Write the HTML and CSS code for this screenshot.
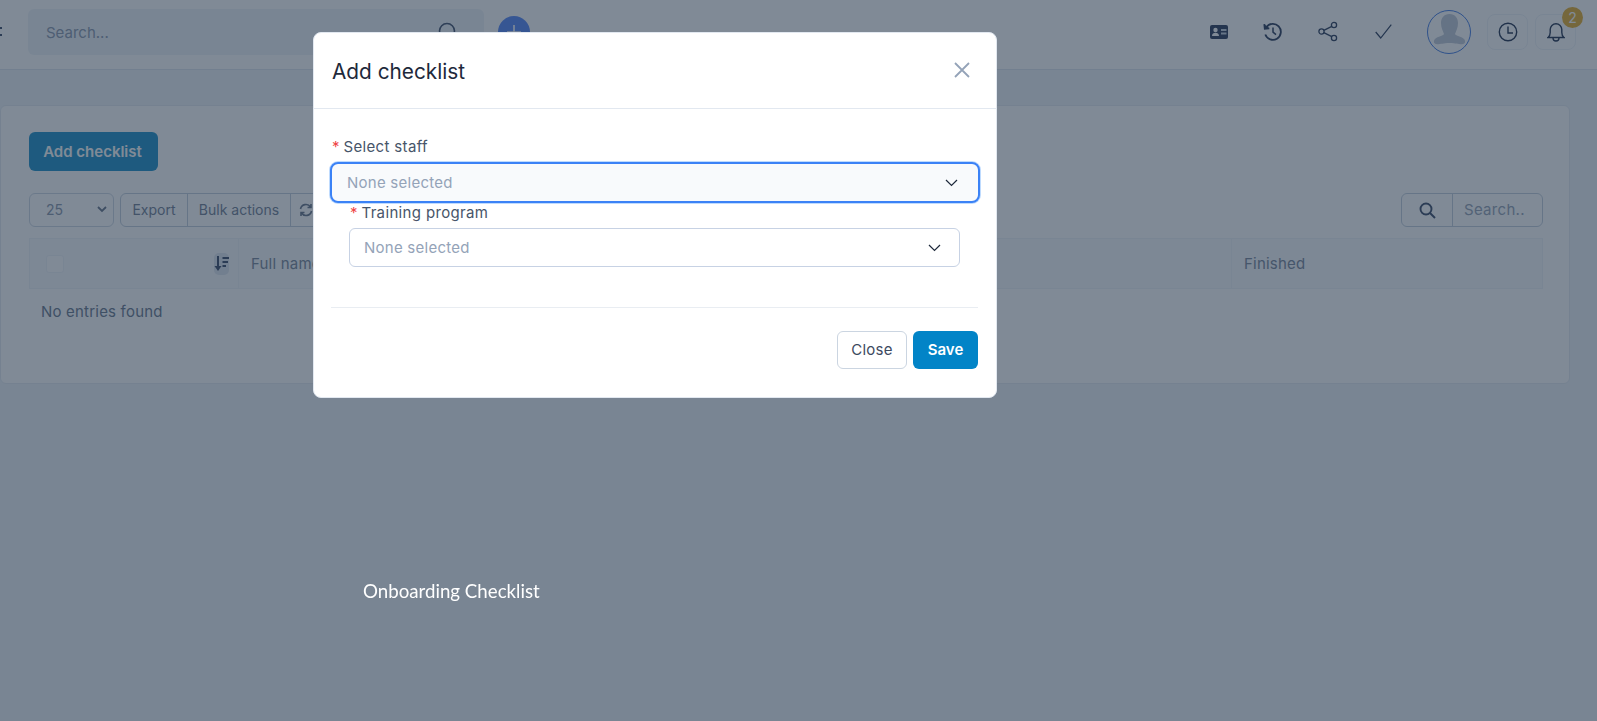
FILE: index.html
```html
<!DOCTYPE html>
<html lang="en">
<head>
<meta charset="utf-8">
<title>Add checklist</title>
<link rel="stylesheet" href="styles.css">
</head>
<body>
<div class="page">
  <header class="topbar">
    <span class="menu-stub"></span>
    <div class="global-search">
      <span class="global-search-text">Search...</span>
      <svg class="global-search-icon" width="22" height="22" viewBox="0 0 22 22" fill="none" stroke="#5b6880" stroke-width="1.6"><circle cx="11" cy="10" r="7.500"/><path d="M16 16l5 5"/></svg>
    </div>
    <span class="quick-add">
      <svg width="14" height="14" viewBox="0 0 14 14" stroke="#fff" stroke-width="1.6"><path d="M7 0v14M0 7h14"/></svg>
    </span>
    <nav class="top-icons">
      <svg class="i-id" width="18" height="14" viewBox="0 0 18 14"><rect width="18" height="14" rx="2" fill="#465570"/><circle cx="5.500" cy="5" r="2.200" fill="#fff"/><path d="M2 11c0-2.200 1.600-3.200 3.500-3.200S9 8.800 9 11z" fill="#fff"/><path d="M11 4h5.500v2H11zM11 7.500h5.500v2H11z" fill="#cbd5e1"/></svg>
      <svg class="i-history" width="20" height="20" viewBox="0 0 20 20" fill="none" stroke="#465570" stroke-width="1.8"><path d="M3.300 5.200A8 8 0 1 1 2.300 12.500"/><path d="M1.300 2.200l.5 4.500 4.500-.4" fill="#465570"/><path d="M10 5.500v4.700l3 2.500" stroke-width="1.500"/></svg>
      <svg class="i-share" width="20" height="21" viewBox="0 0 20 21" fill="none" stroke="#465570" stroke-width="1.300"><circle cx="16" cy="4" r="2.600"/><circle cx="3.500" cy="10.500" r="2.600"/><circle cx="16" cy="17" r="2.600"/><path d="M5.800 9.300l8-4M5.800 11.700l8 4"/></svg>
      <svg class="i-check" width="17" height="15" viewBox="0 0 17 15" fill="none" stroke="#465570" stroke-width="1.200"><path d="M.7 8l5 6L16.300.7"/></svg>
      <span class="avatar">
        <svg width="39" height="39" viewBox="0 0 39 39"><path d="M19.500 2c5.500 0 8.500 4 8.500 9 0 5-2 8-3 11 1 2 6 2 9 5 2 2 1 5-1 5-3 1-6-1-13.500-1s-10.500 2-13.500 1c-2 0-3-3-1-5 3-3 8-3 9-5-1-3-3-6-3-11 0-5 3-9 8.500-9z" fill="#c9d0dc"/></svg>
      </span>
      <span class="icon-box">
        <svg width="20" height="20" viewBox="0 0 20 20" fill="none" stroke="#3f4d66" stroke-width="1.400"><circle cx="10" cy="10" r="8.700"/><path d="M10 4.500V11h5"/></svg>
      </span>
      <span class="icon-box bell">
        <svg width="18" height="20" viewBox="0 0 18 20" fill="none" stroke="#3f4d66" stroke-width="1.400"><path d="M1 15.500c1.500-1 2.200-2.500 2.200-5V7.500a5.800 5.800 0 0 1 11.600 0v3c0 2.500.7 4 2.200 5z"/><path d="M6 16c0 4 6 4 6 0"/></svg>
        <span class="badge">2</span>
      </span>
    </nav>
  </header>

  <main class="card">
    <button class="btn-add">Add checklist</button>
    <div class="tools">
      <div class="tools-left">
        <span class="length">25
          <svg width="10" height="7" viewBox="0 0 10 7" fill="none" stroke="#7b8799" stroke-width="1.800"><path d="M1 1l4 4 4-4"/></svg>
        </span>
        <div class="btn-group">
          <span class="grp-btn export">Export</span>
          <span class="grp-btn bulk">Bulk actions</span>
          <span class="grp-btn refresh">
            <svg width="14" height="14" viewBox="0 0 14 14" fill="none" stroke="#7b8799" stroke-width="1.600"><path d="M1.500 6a5.500 5.500 0 0 1 10-2M12.500 8a5.500 5.500 0 0 1-10 2M12 1v3.500H8.500M2 13V9.500h3.500"/></svg>
          </span>
        </div>
      </div>
      <div class="table-search">
        <span class="table-search-icon">
          <svg width="17" height="17" viewBox="0 0 17 17" fill="none" stroke="#55637c" stroke-width="1.900"><circle cx="7" cy="7" r="5.500"/><path d="M11 11l5 5"/></svg>
        </span>
        <span class="table-search-text">Search..</span>
      </div>
    </div>
    <div class="thead">
      <div class="th-check">
        <span class="checkbox"></span>
        <span class="sort">
          <svg width="15" height="15" viewBox="0 0 15 15" fill="#55637c"><path d="M3 0h2v10h2.500L4 15 .5 10H3zM8.500 1H15v2H8.500zM8.500 5H14v2H8.500zM8.500 9H12v2H8.500z"/></svg>
        </span>
      </div>
      <div class="th-name">Full name</div>
      <div class="th-finished">Finished</div>
    </div>
    <p class="empty">No entries found</p>
  </main>
</div>

<div class="backdrop">
  <section class="modal">
    <header class="modal-head">
      <h2 class="modal-title">Add checklist</h2>
      <svg class="modal-x" width="16" height="16" viewBox="0 0 16 16" stroke="#94a3b8" stroke-width="1.800"><path d="M1 1l14 14M15 1L1 15"/></svg>
    </header>
    <div class="modal-body">
      <div class="field">
        <label class="label"><span class="req">*</span> Select staff</label>
        <div class="select focus">
          <span>None selected</span>
          <svg width="13" height="8" viewBox="0 0 13 8" fill="none" stroke="#1e293b" stroke-width="1.200"><path d="M1 1l5.500 5.500L12 1"/></svg>
        </div>
      </div>
      <div class="field indented">
        <label class="label"><span class="req">*</span> Training program</label>
        <div class="select">
          <span>None selected</span>
          <svg width="13" height="8" viewBox="0 0 13 8" fill="none" stroke="#1e293b" stroke-width="1.200"><path d="M1 1l5.500 5.500L12 1"/></svg>
        </div>
      </div>
      <hr class="divider">
      <div class="modal-foot">
        <button class="btn btn-close">Close</button>
        <button class="btn btn-save">Save</button>
      </div>
    </div>
  </section>
  <p class="caption">Onboarding Checklist</p>
</div>
</body>
</html>
```

FILE: styles.css
```css
* { box-sizing: border-box; }
html, body { margin: 0; padding: 0; }
body {
  width: 1597px;
  height: 721px;
  overflow: hidden;
  background: #f1f5f9;
  font-family: Inter, "Liberation Sans", sans-serif;
  color: #475569;
}
.page { height: 721px; }

/* top bar */
.topbar {
  display: flex;
  align-items: center;
  height: 70px;
  background: #fff;
  border-bottom: 1px solid #e2e8f0;
  margin-bottom: 35px;
  padding: 0 21px 6px 0;
}
.menu-stub {
  width: 2px;
  height: 9px;
  margin-right: 26px;
  border-top: 2px solid #55637c;
  border-bottom: 2px solid #55637c;
}
.global-search {
  width: 456px;
  height: 46px;
  background: #f1f5f9;
  border-radius: 6px;
  display: flex;
  align-items: center;
  justify-content: space-between;
  padding: 0 26px 0 18px;
  font-size: 15px;
  color: #9aa6b8;
}
.global-search-text { padding-top: 1px; }
.quick-add {
  width: 32px;
  height: 32px;
  margin-left: 14px;
  border-radius: 50%;
  background: #6b96f8;
  display: flex;
  align-items: center;
  justify-content: center;
}
.top-icons {
  margin-left: auto;
  display: flex;
  align-items: center;
}
.i-id { margin-right: 35px; }
.i-history { margin-right: 35px; }
.i-share { margin-right: 37px; }
.i-check { margin-right: 35px; }
.avatar {
  width: 44px;
  height: 44px;
  border-radius: 50%;
  border: 1.500px solid #5b8de8;
  background: #fff;
  padding: 1px;
  margin-right: 16px;
  display: flex;
  align-items: center;
  justify-content: center;
  overflow: hidden;
}
.avatar svg { border-radius: 50%; background: #fff; }
.icon-box {
  width: 41px;
  height: 36px;
  border: 1px solid #f1f5f9;
  border-radius: 8px;
  display: flex;
  align-items: center;
  justify-content: center;
  position: relative;
}
.bell { margin-left: 7px; }
.badge {
  position: absolute;
  top: -8px;
  right: -8px;
  width: 21px;
  height: 21px;
  border-radius: 50%;
  background: #e8b84a;
  color: #fff;
  font-size: 14px;
  line-height: 21px;
  text-align: center;
}

/* card */
.card {
  margin: 0 27px 0 0;
  height: 279px;
  background: #fff;
  border: 1px solid #e8edf3;
  border-radius: 6px;
  padding: 26px 26px 0 28px;
}
.btn-add {
  display: block;
  width: 129px;
  height: 39px;
  border: 0;
  border-radius: 6px;
  background: #3a9fd0;
  color: #fff;
  font: 600 15px Inter, sans-serif;
  padding: 0 2px 1px 0;
}
.tools {
  display: flex;
  justify-content: space-between;
  margin-top: 22px;
}
.tools-left { display: flex; gap: 6px; }
.length {
  width: 85px;
  height: 34px;
  border: 1px solid #d5dde7;
  border-radius: 6px;
  display: flex;
  align-items: center;
  justify-content: space-between;
  padding: 0 6px 1px 16px;
  font-size: 14px;
  color: #98a4b6;
}
.btn-group {
  display: flex;
  height: 34px;
  border: 1px solid #cbd5e1;
  border-radius: 6px;
  font-size: 14px;
  color: #8490a3;
}
.grp-btn {
  display: flex;
  align-items: center;
  justify-content: center;
  height: 100%;
  padding-bottom: 1px;
  border-right: 1px solid #cbd5e1;
}
.export { width: 67px; }
.bulk { width: 103px; }
.refresh { width: 30px; border-right: 0; }
.table-search {
  display: flex;
  width: 142px;
  height: 34px;
  border: 1px solid #cbd5e1;
  border-radius: 6px;
}
.table-search-icon {
  width: 51px;
  display: flex;
  align-items: center;
  justify-content: center;
  border-right: 1px solid #cbd5e1;
}
.table-search-text {
  padding-left: 11px;
  line-height: 32px;
  font-size: 15px;
  letter-spacing: .3px;
  color: #a3aec0;
}
.thead {
  display: flex;
  height: 51px;
  margin-top: 11px;
  background: #f8fafc;
  border: 1px solid #f1f5f9;
  font-size: 15px;
  letter-spacing: .2px;
  color: #8a96a8;
}
.th-check {
  width: 209px;
  display: flex;
  align-items: center;
  justify-content: space-between;
  padding: 0 9px 0 16px;
  border-right: 1px solid #f1f5f9;
}
.checkbox {
  width: 18px;
  height: 18px;
  background: #fff;
  border: 1px solid #f1f5f9;
  border-radius: 3px;
}
.sort {
  width: 15px;
  height: 22px;
  border-radius: 5px;
  background: #e2e8f0;
  display: flex;
  align-items: center;
}
.th-name {
  width: 993px;
  padding: 15px 0 0 12px;
  border-right: 1px solid #f1f5f9;
}
.th-finished { padding: 15px 0 0 12px; }
.empty {
  margin: 13px 0 0 12px;
  font-size: 15px;
  letter-spacing: .2px;
  line-height: 20px;
  color: #7d8a9c;
}

/* modal overlay */
.backdrop {
  position: fixed;
  inset: 0;
  background: rgba(1, 21, 45, .5);
}
.modal {
  position: absolute;
  left: 313px;
  top: 32px;
  width: 684px;
  height: 366px;
  background: #fff;
  border-radius: 8px;
  border: 1px solid #e2e8f0;
}
.modal-head {
  height: 76px;
  border-bottom: 1px solid #e2e8f0;
  display: flex;
  align-items: center;
  justify-content: space-between;
  padding: 0 26px 0 18px;
}
.modal-title {
  margin: 0;
  padding-top: 1px;
  font-size: 20.800px;
  font-weight: 400;
  color: #1e293b;
}
.modal-x { margin-bottom: 2px; }
.modal-body { padding: 28px 18px 0 16px; }
.field { width: 650px; }
.indented { width: 611px; margin-left: 19px; }
.label {
  display: block;
  font-size: 15px;
  letter-spacing: .35px;
  line-height: 20px;
  color: #475569;
  padding-left: 2px;
  margin-bottom: 5px;
}
.indented .label { padding-left: 1px; }
.req { color: #ef4444; margin-right: -1px; }
.select {
  height: 39px;
  border: 1px solid #c7d2e4;
  border-radius: 6px;
  display: flex;
  align-items: center;
  justify-content: space-between;
  padding: 0 18px 1px 14px;
  font-size: 15px;
  letter-spacing: .25px;
  color: #94a3b8;
}
.select svg { margin-top: 1px; }
.select.focus {
  height: 41px;
  border: 2px solid #3b82f6;
  box-shadow: 0 0 0 1px #bfdbfe;
  background: #f8fafc;
  border-radius: 8px;
  padding: 0 20px 1px 15px;
}
.divider {
  width: 647px;
  height: 1px;
  margin: 40px 0 23px 1px;
  border: 0;
  background: #e9edf2;
}
.modal-foot {
  display: flex;
  justify-content: flex-end;
  gap: 6px;
  width: 647px;
  margin-left: 1px;
}
.btn {
  height: 38px;
  border-radius: 6px;
  font-size: 15px;
  padding: 0 0 2px;
}
.btn-close {
  width: 70px;
  border: 1px solid #cbd5e1;
  background: #fff;
  color: #3d4a5f;
  font-family: Inter, sans-serif;
  font-weight: 400;
  letter-spacing: .3px;
}
.btn-save {
  width: 65px;
  border: 0;
  background: #0284c7;
  color: #fff;
  font-family: Inter, sans-serif;
  font-weight: 600;
}
.caption {
  position: absolute;
  left: 363px;
  top: 579px;
  margin: 0;
  font-family: Lato, "Open Sans", sans-serif;
  font-size: 18.700px;
  line-height: 24px;
  color: #fff;
}
```
